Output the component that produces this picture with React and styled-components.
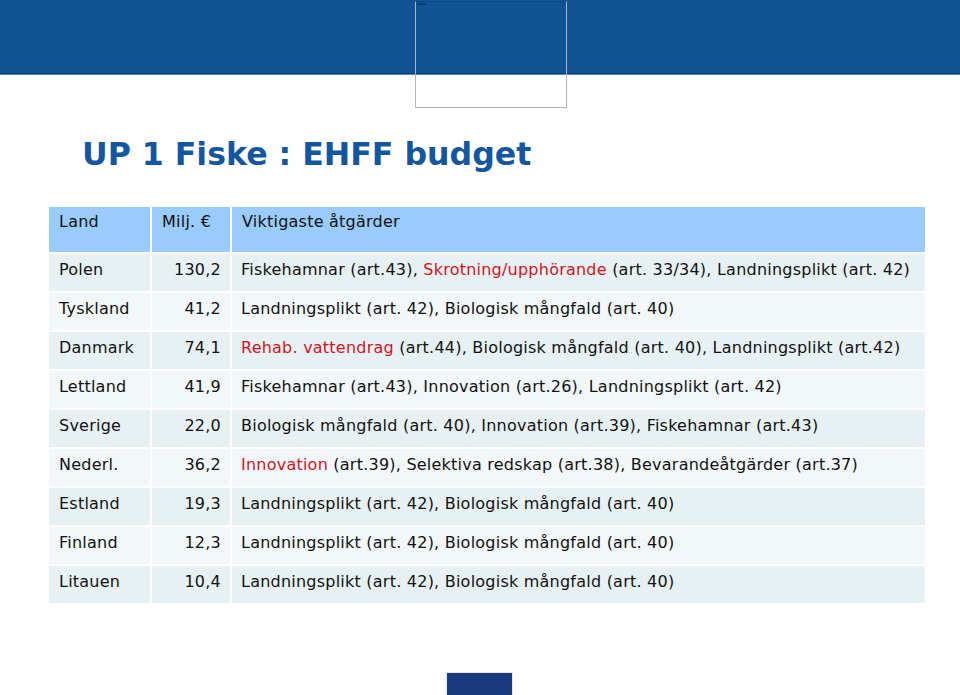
import React from "react";
import styled, { createGlobalStyle } from "styled-components";

const Global = createGlobalStyle`
  html, body { margin: 0; padding: 0; background: #ffffff; }
  body { font-family: "DejaVu Sans", Verdana, sans-serif; }
`;

const Page = styled.div`
  position: relative;
  width: 960px;
  height: 695px;
  overflow: hidden;
  display: flex;
  flex-direction: column;
  background: #ffffff;
`;

const Band = styled.div`
  height: 73px;
  background: #0f5596;
  border-bottom: 1px solid #0a3e73;
  box-shadow: 0 1px 0 #5a8dc0;
  flex: none;
`;

const Frame = styled.div`
  position: absolute;
  left: 415px;
  top: 1px;
  width: 150px;
  height: 105px;
  border: 1px solid #b4b4b4;
  border-top-color: #0b4a85;
  &::before {
    content: "";
    position: absolute;
    left: 1px;
    top: 1px;
    width: 9px;
    height: 2px;
    background: #0b3f70;
  }
`;

const Title = styled.h1`
  margin: 60px 0 0 82px;
  font-family: "DejaVu Sans", Verdana, sans-serif;
  font-weight: bold;
  font-size: 31.6px;
  line-height: 40px;
  color: #1457a0;
`;

const Table = styled.div`
  margin: 33px 0 0 49px;
  width: 876px;
  display: grid;
  grid-template-columns: 101px 78px 693px;
  gap: 2px;
  font-size: 16px;
  letter-spacing: 0.23px;
  line-height: 19px;
  color: #111111;
`;

const HeadCell = styled.div`
  height: 45px;
  box-sizing: border-box;
  padding: 5px 9px 0 10px;
  background: #99cbfc;
  white-space: nowrap;
`;

const Cell = styled.div`
  height: 37px;
  box-sizing: border-box;
  padding: 6px 9px 0 ${(p) => (p.$first ? "10px" : "9px")};
  text-align: ${(p) => (p.$right ? "right" : "left")};
  background: ${(p) => (p.$odd ? "#e7f1f4" : "#f2f7f9")};
  white-space: nowrap;
`;

const Red = styled.span`
  color: #d0141e;
`;

const Footer = styled.div`
  margin-top: auto;
  display: flex;
  justify-content: center;
`;

const FooterMark = styled.div`
  width: 65px;
  height: 22px;
  margin-left: -1px;
  background: #1a3a7e;
  box-shadow: 0 0 0 1px #e4e8f0;
`;

const rows = [
  ["Polen", "130,2", <>Fiskehamnar (art.43), <Red>Skrotning/upphörande</Red> (art. 33/34), Landningsplikt (art. 42)</>],
  ["Tyskland", "41,2", <>Landningsplikt (art. 42), Biologisk mångfald (art. 40)</>],
  ["Danmark", "74,1", <><Red>Rehab. vattendrag</Red> (art.44), Biologisk mångfald (art. 40), Landningsplikt (art.42)</>],
  ["Lettland", "41,9", <>Fiskehamnar (art.43), Innovation (art.26), Landningsplikt (art. 42)</>],
  ["Sverige", "22,0", <>Biologisk mångfald (art. 40), Innovation (art.39), Fiskehamnar (art.43)</>],
  ["Nederl.", "36,2", <><Red>Innovation</Red> (art.39), Selektiva redskap (art.38), Bevarandeåtgärder (art.37)</>],
  ["Estland", "19,3", <>Landningsplikt (art. 42), Biologisk mångfald (art. 40)</>],
  ["Finland", "12,3", <>Landningsplikt (art. 42), Biologisk mångfald (art. 40)</>],
  ["Litauen", "10,4", <>Landningsplikt (art. 42), Biologisk mångfald (art. 40)</>],
];

export default function App() {
  return (
    <Page>
      <Global />
      <Band />
      <Frame />
      <Title>UP 1 Fiske : EHFF budget</Title>
      <Table>
        <HeadCell>Land</HeadCell>
        <HeadCell>Milj. €</HeadCell>
        <HeadCell>Viktigaste åtgärder</HeadCell>
        {rows.map(([land, sum, text], i) => (
          <React.Fragment key={land}>
            <Cell $first $odd={i % 2 === 0}>{land}</Cell>
            <Cell $right $odd={i % 2 === 0}>{sum}</Cell>
            <Cell $odd={i % 2 === 0}>{text}</Cell>
          </React.Fragment>
        ))}
      </Table>
      <Footer>
        <FooterMark />
      </Footer>
    </Page>
  );
}
